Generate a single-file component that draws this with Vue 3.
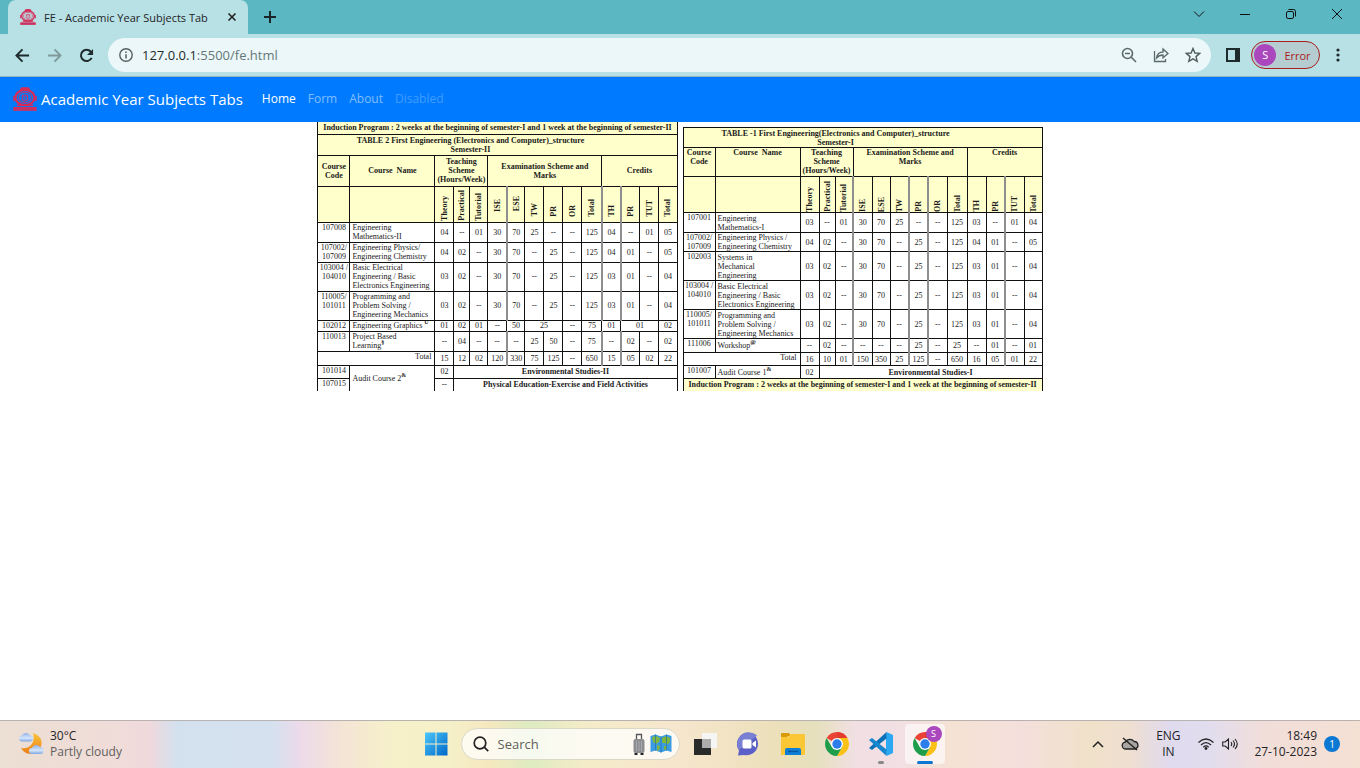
<script setup>
import { ref } from 'vue'

const address = ref('127.0.0.1:5500/fe.html')
const query = ref('')

const navLinks = [
  { label: 'Home', state: 'active' },
  { label: 'Form', state: '' },
  { label: 'About', state: '' },
  { label: 'Disabled', state: 'disabled' }
]

const columns = ['Theory', 'Practical', 'Tutorial', 'ISE', 'ESE', 'TW', 'PR', 'OR', 'Total', 'TH', 'PR', 'TUT', 'Total']
const induction = 'Induction Program : 2 weeks at the beginning of semester-I and 1 week at the beginning of semester-II'

const n = (text) => text.split(' ').map((v) => ({ v, span: 1 }))

const semesters = [
  {
    id: 'second',
    inductionFirst: true,
    title: 'TABLE 2 First Engineering (Electronics and Computer)_structure',
    term: 'Semester-II',
    soft: [3, 8, 9],
    rows: [
      { h: 'two', code: ['107008'], name: ['Engineering', 'Mathematics-II'], cells: n('04 -- 01 30 70 25 -- -- 125 04 -- 01 05') },
      { h: 'two', code: ['107002/', '107009'], name: ['Engineering Physics/', 'Engineering Chemistry'], cells: n('04 02 -- 30 70 -- 25 -- 125 04 01 -- 05') },
      { h: 'three', code: ['103004 /', '104010'], name: ['Basic Electrical', 'Engineering / Basic', 'Electronics Engineering'], cells: n('03 02 -- 30 70 -- 25 -- 125 03 01 -- 04') },
      { h: 'three', code: ['110005/', '101011'], name: ['Programming and', 'Problem Solving /', 'Engineering Mechanics'], cells: n('03 02 -- 30 70 -- 25 -- 125 03 01 -- 04') },
      {
        h: 'one', code: ['102012'], name: ['Engineering Graphics '], mark: 'U',
        cells: [...n('01 02 01 -- 50'), { v: '25', span: 2 }, ...n('-- 75 01'), { v: '01', span: 2 }, ...n('02')]
      },
      { h: 'two', code: ['110013'], name: ['Project Based', 'Learning'], mark: '§', cells: n('-- 04 -- -- -- 25 50 -- 75 -- 02 -- 02') }
    ],
    total: n('15 12 02 120 330 75 125 -- 650 15 05 02 22'),
    audit: 'Audit Course 2',
    audits: [
      { code: '101014', theory: '02', text: 'Environmental Studies-II' },
      { code: '107015', theory: '--', text: 'Physical Education-Exercise and Field Activities' }
    ]
  },
  {
    id: 'first',
    inductionFirst: false,
    title: 'TABLE -1 First Engineering(Electronics and Computer)_structure',
    term: 'Semester-I',
    soft: [2, 5, 6, 10],
    rows: [
      { h: 'two', code: ['107001'], name: ['Engineering', 'Mathematics-I'], cells: n('03 -- 01 30 70 25 -- -- 125 03 -- 01 04') },
      { h: 'snug', code: ['107002/', '107009'], name: ['Engineering Physics /', 'Engineering Chemistry'], cells: n('04 02 -- 30 70 -- 25 -- 125 04 01 -- 05') },
      { h: 'three', code: ['102003'], name: ['Systems in', 'Mechanical', 'Engineering'], cells: n('03 02 -- 30 70 -- 25 -- 125 03 01 -- 04') },
      { h: 'three', code: ['103004 /', '104010'], name: ['Basic Electrical', 'Engineering / Basic', 'Electronics Engineering'], cells: n('03 02 -- 30 70 -- 25 -- 125 03 01 -- 04') },
      { h: 'three', code: ['110005/', '101011'], name: ['Programming and', 'Problem Solving /', 'Engineering Mechanics'], cells: n('03 02 -- 30 70 -- 25 -- 125 03 01 -- 04') },
      { h: 'wide', code: ['111006'], name: ['Workshop'], mark: '@', cells: n('-- 02 -- -- -- -- 25 -- 25 -- 01 -- 01') }
    ],
    total: n('16 10 01 150 350 25 125 -- 650 16 05 01 22'),
    audit: 'Audit Course 1',
    audits: [{ code: '101007', theory: '02', text: 'Environmental Studies-I' }]
  }
]
</script>

<template>
  <div class="screen">
    <svg class="defs" aria-hidden="true">
      <defs>
        <symbol id="emblem" viewBox="0 0 24 24">
          <g fill="none" stroke="#d52b58">
            <ellipse cx="12" cy="10.500" rx="9.500" ry="7.600" stroke-width="2.200" />
            <ellipse cx="12" cy="10.500" rx="6.600" ry="5.400" stroke-width=".9" />
            <path d="M7 2.300h10M8 .900h8M1 9v5M23 9v5" stroke-width="1.500" />
            <path d="M9.500 7.500v6M12 6.500v8M14.500 7.500v6M8.500 10l3.500-2 3.500 2M8.500 12.500l3.500 2 3.500-2" stroke-width=".8" />
            <path d="M4 18.300h16" stroke-width="1.600" />
          </g>
          <path d="M.3 20h23.400v3.800H.3z" fill="#d52b58" />
          <path d="M3 22h18" stroke="#8d4c8f" stroke-width=".8" stroke-dasharray="2 1" />
        </symbol>
        <symbol id="chrome" viewBox="0 0 24 24">
          <path d="M12 12 1.610 6A12 12 0 0 1 22.390 6z" fill="#ea4335" />
          <path d="M12 12V0A12 12 0 0 1 22.390 6z" fill="#e33b2e" />
          <path d="M22.390 6A12 12 0 0 1 12 24l5.200-9L12 6z" fill="#fbc116" />
          <path d="M1.610 6A12 12 0 0 0 12 24l5.200-9L6.800 15z" fill="#1e9e4a" />
          <circle cx="12" cy="12" r="6" fill="#fff" />
          <circle cx="12" cy="12" r="4.700" fill="#2b7de9" />
        </symbol>
      </defs>
    </svg>

    <header class="browser">
      <div class="tabstrip">
        <div class="tab">
          <svg class="favicon"><use href="#emblem" /></svg>
          <span class="tab-title">FE - Academic Year Subjects Tab</span>
          <button class="tab-close" aria-label="Close tab">
            <svg viewBox="0 0 10 10"><path d="M1.500 1.500l7 7M8.500 1.500l-7 7" stroke="#222" stroke-width="1.600" /></svg>
          </button>
        </div>
        <button class="new-tab" aria-label="New tab">
          <svg viewBox="0 0 12 12"><path d="M6 0v12M0 6h12" stroke="#1b2527" stroke-width="2" /></svg>
        </button>
        <div class="window-controls">
          <button aria-label="Search tabs"><svg viewBox="0 0 12 12"><path d="M1 3.500l5 5 5-5" /></svg></button>
          <button aria-label="Minimize"><svg viewBox="0 0 12 12"><path d="M1 6.500h10" /></svg></button>
          <button aria-label="Restore">
            <svg viewBox="0 0 12 12"><rect x="1.500" y="3.500" width="7" height="7" rx="1.500" /><path d="M3.500 1.500h5q2 0 2 2v5" /></svg>
          </button>
          <button aria-label="Close"><svg viewBox="0 0 12 12"><path d="M1 1l10 10M11 1L1 11" /></svg></button>
        </div>
      </div>
      <div class="toolbar">
        <button class="tool" aria-label="Back">
          <svg viewBox="0 0 16 16"><path d="M15 8H2M8 1.500L1.500 8 8 14.500" stroke="#1f2a2c" stroke-width="2" fill="none" /></svg>
        </button>
        <button class="tool" aria-label="Forward">
          <svg viewBox="0 0 16 16"><path d="M1 8h13M8 1.500L14.500 8 8 14.500" stroke="#80999b" stroke-width="2" fill="none" /></svg>
        </button>
        <button class="tool" aria-label="Reload">
          <svg viewBox="0 0 16 16"><path d="M13.500 10.500A6 6 0 1 1 12.600 4L14 5.500" stroke="#1f2a2c" stroke-width="2.100" fill="none" /><path d="M15 1v6.500H8.500z" fill="#1f2a2c" /></svg>
        </button>
        <div class="omnibox">
          <svg class="info" viewBox="0 0 14 14"><circle cx="7" cy="7" r="6.200" fill="none" stroke="#53605f" stroke-width="1.400" /><path d="M7 6.200v4.300M7 3.500v1.500" stroke="#53605f" stroke-width="1.500" /></svg>
          <label class="address">
            <span class="address-text" aria-hidden="true"><b>127.0.0.1</b>:5500/fe.html</span>
            <input v-model="address" aria-label="Address" />
          </label>
          <button aria-label="Zoom">
            <svg viewBox="0 0 16 16"><g fill="none" stroke="#5b6a6b" stroke-width="1.600"><circle cx="6.500" cy="6.500" r="5" /><path d="M10.300 10.300l4.700 4.700M4 6.500h5" /></g></svg>
          </button>
          <button aria-label="Share">
            <svg viewBox="0 0 16 16"><g fill="none" stroke="#5b6a6b" stroke-width="1.300"><path d="M1.500 4v10.500h11V12" /><path d="M3.500 11Q4.500 5 10 5V2l5 4.500-5 4.300V8Q6 8 3.500 11z" /></g></svg>
          </button>
          <button aria-label="Bookmark">
            <svg viewBox="0 0 16 16"><path d="M8 1.500l1.900 4.500 4.800.4-3.700 3.200 1.200 4.700L8 11.800l-4.200 2.500L5 9.600 1.300 6.400l4.800-.4z" fill="none" stroke="#4f5e5f" stroke-width="1.400" /></svg>
          </button>
        </div>
        <button class="tool side" aria-label="Side panel">
          <svg viewBox="0 0 14 14"><path d="M1 1h12v12H1z" fill="none" stroke="#1f2a2c" stroke-width="2" /><path d="M9 0h5v14H9z" fill="#1f2a2c" /></svg>
        </button>
        <button class="profile"><span class="avatar">S</span>Error</button>
        <button class="menu" aria-label="Menu">
          <svg viewBox="0 0 4 14"><g fill="#1f2a2c"><circle cx="2" cy="2" r="1.600" /><circle cx="2" cy="7" r="1.600" /><circle cx="2" cy="12" r="1.600" /></g></svg>
        </button>
      </div>
    </header>

    <nav class="navbar">
      <a class="brand" href="#">
        <svg><use href="#emblem" /></svg>
        <span>Academic Year Subjects Tabs</span>
      </a>
      <a v-for="link in navLinks" :key="link.label" class="nav-link" :class="link.state" href="#">{{ link.label }}</a>
    </nav>

    <main class="content">
      <table v-for="s in semesters" :key="s.id" class="scheme" :class="s.id">
        <colgroup>
          <col class="c-code" /><col class="c-name" /><col class="c-th" /><col class="c-pr" /><col class="c-tu" />
          <col v-for="i in 10" :key="i" :class="i === 6 ? 'c-total' : i === 2 || i === 10 ? 'c-tu' : 'c-th'" />
        </colgroup>
        <thead>
          <tr v-if="s.inductionFirst" class="r-induction"><th colspan="15">{{ induction }}</th></tr>
          <tr class="r-title"><th colspan="15">{{ s.title }}<br />{{ s.term }}</th></tr>
          <tr class="r-groups">
            <th>Course<br />Code</th>
            <th>Course&nbsp; Name</th>
            <th colspan="3">Teaching<br />Scheme<br />(Hours/Week)</th>
            <th colspan="6">Examination Scheme and<br />Marks</th>
            <th colspan="4">Credits</th>
          </tr>
          <tr class="r-columns">
            <th></th>
            <th></th>
            <th v-for="(c, i) in columns" :key="i" :class="{ soft: s.soft.includes(i), low: i < 3, high: i === 3 || i === 4 }"><span>{{ c }}</span></th>
          </tr>
        </thead>
        <tbody>
          <tr v-for="row in s.rows" :key="row.code[0]" :class="row.h">
            <td class="code"><div v-for="line in row.code" :key="line">{{ line }}</div></td>
            <td class="name"><div v-for="(line, i) in row.name" :key="line">{{ line }}<sup v-if="row.mark && i === row.name.length - 1">{{ row.mark }}</sup></div></td>
            <td v-for="(cell, i) in row.cells" :key="i" :colspan="cell.span" :class="{ soft: row.cells.length === 13 && s.soft.includes(i) }">{{ cell.v }}</td>
          </tr>
          <tr class="r-total">
            <td colspan="2" class="total">Total</td>
            <td v-for="(cell, i) in s.total" :key="i" :class="{ soft: s.soft.includes(i) }">{{ cell.v }}</td>
          </tr>
          <tr v-for="(a, i) in s.audits" :key="a.code" class="r-audit">
            <td class="code">{{ a.code }}</td>
            <td v-if="i === 0" class="name audit" :rowspan="s.audits.length">{{ s.audit }}<sup>&amp;</sup></td>
            <td>{{ a.theory }}</td>
            <td colspan="12" class="strong">{{ a.text }}</td>
          </tr>
          <tr v-if="!s.inductionFirst" class="r-induction"><th colspan="15">{{ induction }}</th></tr>
        </tbody>
      </table>
    </main>

    <footer class="taskbar">
      <button class="weather">
        <svg viewBox="0 0 26 26">
          <defs>
            <linearGradient id="moon" x1="0" y1="0" x2="0" y2="1"><stop offset="0" stop-color="#f8c53a" /><stop offset="1" stop-color="#ee7d17" /></linearGradient>
            <linearGradient id="cloud" x1="0" y1="0" x2="0" y2="1"><stop offset="0" stop-color="#8fb4ec" /><stop offset=".6" stop-color="#d6e6fb" /><stop offset="1" stop-color="#7ea6e2" /></linearGradient>
          </defs>
          <path d="M15 2c7 2 10 8 8 13-2 8-14 12-20 2 8 2 15-5 12-15z" fill="url(#moon)" />
          <path d="M4 10.500a3 3 0 0 1 0-6 4.500 4.500 0 0 1 8 0 3 3 0 0 1 0 6z" fill="url(#cloud)" />
          <path d="M14 23a3 3 0 0 1 0-6 4.500 4.500 0 0 1 8-1 3.500 3.500 0 0 1 0 7z" fill="url(#cloud)" />
        </svg>
        <span class="weather-text"><span>30°C</span><span class="muted">Partly cloudy</span></span>
      </button>

      <div class="apps">
        <button class="app" aria-label="Start">
          <svg viewBox="0 0 24 24">
            <defs><linearGradient id="win" x1="0" y1="0" x2="1" y2="1"><stop offset="0" stop-color="#4cc8fa" /><stop offset="1" stop-color="#0067c8" /></linearGradient></defs>
            <path d="M1 .500h10.500V11.500H1zM12.500.500H23.500V11.500H12.500zM1 12.500h10.500V23.500H1zM12.500 12.500H23.500V23.500H12.500z" fill="url(#win)" />
          </svg>
        </button>
        <label class="search">
          <svg class="glass" viewBox="0 0 16 16"><g fill="none" stroke="#222" stroke-width="1.700"><circle cx="7" cy="7" r="5.800" /><path d="M11.200 11.200l4 4" /></g></svg>
          <input v-model="query" placeholder="Search" aria-label="Search" />
          <svg class="suitcase" viewBox="0 0 14 22"><path d="M4.500 6V1.500h5V6" fill="none" stroke="#55565a" stroke-width="1.300" /><rect x="1.500" y="6" width="11" height="14" rx="2" fill="#8d8e92" /><path d="M4.500 8v10M7 8v10M9.500 8v10" stroke="#a8a9ad" /><path d="M2.500 20h3v2h-3zM8.500 20h3v2h-3z" fill="#222" /></svg>
          <svg class="map" viewBox="0 0 22 20"><path d="M.5 2l5-1.500 5.500 2 5.500-2 5 1.500v16l-5-1.500-5.500 2-5.500-2-5 1.500z" fill="#3c9ce3" /><path d="M2 3l4-1 4 2-1 4-3 2-3-2zM7 11l3 1-1 4-2 1zM12 4l4-2 4 2v4l-3 3-2-2-3 0zM14 12l3 0 0 3-3 1z" fill="#7fb63d" /><path d="M5.500.5v16M11 2.500v16M16.500.5v16" stroke="#246fa9" stroke-width=".7" /></svg>
        </label>
        <button class="app" aria-label="Task view">
          <svg viewBox="0 0 24 24"><path d="M1 7h17v16H1z" fill="#292b2b" /><path d="M9 1h15v15H9z" fill="#f5f5f3" /><path d="M9 7h9v9H9z" fill="#adadad" /></svg>
        </button>
        <button class="app" aria-label="Chat">
          <svg viewBox="0 0 24 24"><path d="M12 .5A11.500 11.500 0 1 1 7 23l-6 .5 1-5A11.500 11.500 0 0 1 12 .5z" fill="#5b5fc7" /><path d="M2 18A11.500 11.500 0 0 1 12 .5q5 0 8 3z" fill="#7980d4" /><rect x="5.500" y="7.500" width="9" height="9" rx="1.500" fill="#fff" /><path d="M15.500 11l3.500-2.500v7L15.500 13z" fill="#fff" /></svg>
        </button>
        <button class="app" aria-label="File Explorer">
          <svg viewBox="0 0 24 24"><path d="M0 2q0-1 1-1h7l2 3h-3L5 6H0z" fill="#d99a07" /><path d="M0 5h7l3-3h13q1 0 1 1v20H0z" fill="#fcc736" /><path d="M4 23v-5q0-2 2-2h12q2 0 2 2v5z" fill="#0f7fd6" /><path d="M7 19.500h10" stroke="#09549c" stroke-width="1.300" /></svg>
        </button>
        <button class="app" aria-label="Chrome"><svg><use href="#chrome" /></svg></button>
        <button class="app running" aria-label="Visual Studio Code">
          <svg viewBox="0 0 24 24"><path d="M17.500 0L24 3v18l-6.500 3L17 18V6z" fill="#2aa8f2" /><path d="M17.500 0v6.500L3 18 0 16z" fill="#0b72b8" /><path d="M17.500 24v-6.500L3 6 0 8z" fill="#1687cf" /></svg>
        </button>
        <button class="app current" aria-label="Chrome, profile S"><svg><use href="#chrome" /></svg><span class="badge">S</span></button>
      </div>

      <div class="tray">
        <button class="tray-up" aria-label="Hidden icons"><svg viewBox="0 0 12 12"><path d="M1 9l5-5 5 5" fill="none" stroke="#222" stroke-width="1.500" /></svg></button>
        <button class="tray-cloud" aria-label="OneDrive">
          <svg viewBox="0 0 18 14"><path d="M5 12a3.500 3.500 0 0 1-.5-7A5 5 0 0 1 13 4.500 3.800 3.800 0 0 1 14 12z" fill="#aaa5a3" stroke="#222" stroke-width="1.300" /><path d="M2 1l14 12" stroke="#222" stroke-width="1.500" /></svg>
        </button>
        <button class="lang"><span>ENG</span><span>IN</span></button>
        <button class="signal" aria-label="Network and sound">
          <svg viewBox="0 0 16 12"><g fill="none" stroke="#222" stroke-width="1.200"><path d="M.5 4.500q7.500-7 15 0M3 7q5-4.800 10 0M5.300 9.200q2.700-2.500 5.400 0" /></g><circle cx="8" cy="10.500" r="1.400" fill="#222" /></svg>
          <svg viewBox="0 0 16 12"><g fill="none" stroke="#222" stroke-width="1.100"><path d="M.7 4v4h2.500l3.300 3V1L3.200 4z" /><path d="M9 4q1.500 2 0 4M11 2.500q3 3.500 0 7M13 1q4.500 5 0 10" /></g></svg>
        </button>
        <button class="clock"><span>18:49</span><span>27-10-2023</span></button>
        <button class="notice">1</button>
      </div>
    </footer>
  </div>
</template>

<style>
body { margin: 0; }
</style>

<style scoped>
.screen {
  display: flex;
  flex-direction: column;
  min-height: 100vh;
  background: #fff;
  font-family: "Open Sans", "Noto Sans", sans-serif;
  font-size: 12px;
  color: #1f2426;
}
.defs { position: absolute; width: 0; height: 0; }
button {
  display: flex;
  align-items: center;
  justify-content: center;
  padding: 0;
  border: 0;
  background: none;
  font: inherit;
  color: inherit;
}
input { min-width: 0; padding: 0; border: 0; outline: 0; background: none; font: inherit; }
a { text-decoration: none; }
svg { display: block; flex: none; }

.tabstrip { display: flex; height: 34px; padding-left: 8px; background: #5bb7c1; }
.tab {
  display: flex;
  align-items: center;
  box-sizing: border-box;
  width: 240px;
  padding: 0 11px 0 12px;
  border-radius: 8px 8px 0 0;
  background: #b7e1e5;
}
.favicon { width: 16px; height: 16px; }
.tab-title { flex: 1; margin-left: 8px; white-space: nowrap; overflow: hidden; font-size: 11px; }
.tab-close svg { width: 10px; height: 10px; }
.new-tab { width: 44px; }
.new-tab svg { width: 12px; height: 12px; }
.window-controls { display: flex; margin-left: auto; height: 28px; }
.window-controls button { width: 46px; }
.window-controls svg { width: 12px; height: 12px; fill: none; stroke: #111; stroke-width: 1; }

.toolbar {
  display: flex;
  align-items: center;
  box-sizing: border-box;
  height: 43px;
  padding: 0 14px 0 6px;
  border-bottom: 1px solid #91b5b8;
  background: #b7e1e5;
}
.tool { width: 32px; height: 32px; }
.tool svg { width: 15px; height: 15px; }
.omnibox {
  display: flex;
  flex: 1;
  align-items: center;
  height: 34px;
  margin-left: 6px;
  padding: 0 2px 0 11px;
  border-radius: 17px;
  background: #ebf7f8;
}
.info { width: 14px; height: 14px; }
.address { display: grid; flex: 1; margin-left: 9px; font-size: 13px; line-height: 20px; color: #65777a; }
.address > * { grid-area: 1 / 1; }
.address b { font-weight: 400; color: #1f2a2c; }
.address input { color: transparent; caret-color: #1f2a2c; }
.omnibox button { width: 32px; height: 32px; }
.omnibox button svg { width: 16px; height: 16px; }
.side { margin-left: 6px; }
.tool.side svg { width: 14px; height: 14px; }
.profile {
  box-sizing: border-box;
  width: 69px;
  height: 28px;
  margin-left: 2px;
  padding-right: 6px;
  border: 1px solid #a91d1f;
  border-radius: 14px;
  background: #b5ccd0;
  color: #aa1c1c;
  font-size: 11px;
}
.avatar { width: 22px; margin-right: 8px; border-radius: 50%; background: #ab47bc; color: #fff; line-height: 22px; }
.menu { width: 16px; margin-left: 10px; }
.menu svg { width: 4px; height: 14px; }

.navbar {
  display: flex;
  align-items: center;
  box-sizing: border-box;
  height: 45px;
  padding: 0 0 2px 13px;
  background: #007bff;
  font-size: 12px;
}
.brand { display: flex; align-items: center; gap: 4px; margin-right: 13px; color: #fff; font-size: 15px; }
.brand svg { width: 24px; height: 24px; }
.nav-link { padding: 0 6px; color: #80bdff; }
.nav-link.active { color: #fff; }
.nav-link.disabled { color: #409cff; }

.content { display: flex; flex: 1; align-items: flex-start; justify-content: center; gap: 5px; }
.scheme {
  width: 360px;
  table-layout: fixed;
  border-collapse: collapse;
  border-bottom: hidden;
  font-family: "Liberation Serif", serif;
  font-size: 8px;
  line-height: 9px;
  color: #1a1a1a;
}
.second { border-top: hidden; }
.first { margin-top: 5px; }
.c-code { width: 32px; }
.c-name { width: 85px; }
.c-pr { width: 16px; }
.c-tu { width: 18px; }
.c-th { width: 19px; }
.c-total { width: 20px; }
.scheme th, .scheme td { padding: 0; border: 1px solid #111; text-align: center; white-space: nowrap; }
.scheme th { background: #ffffcc; font-weight: 700; }
.scheme .r-title th { padding-right: 54px; }
.scheme .soft { border-right: 2px solid #8e8e8e; }
.scheme .code { vertical-align: top; }
.scheme .name { padding-left: 2px; text-align: left; }
.scheme .name div { white-space: pre; }
.scheme .total { padding-right: 3px; text-align: right; vertical-align: top; }
.scheme .strong { font-weight: 700; }
.scheme sup { font-size: 6px; line-height: 0; font-weight: 700; }
.r-induction { height: 12px; }
.r-title { height: 21px; }
.first .r-title { height: 20px; }
.second .r-groups { height: 31px; }
.first .r-groups { height: 29px; }
.first .r-groups th { vertical-align: top; }
.r-columns { height: 36px; }
.scheme .r-columns th { padding-bottom: 5px; vertical-align: bottom; }
.scheme .r-columns .low { padding-bottom: 1px; }
.scheme .r-columns .high { padding-bottom: 10px; }
.scheme.first .r-columns th { padding-bottom: 0; }
.r-columns span { display: block; width: 9px; margin: 0 auto; writing-mode: vertical-rl; transform: rotate(180deg); }
.one { height: 11px; }
.wide { height: 14px; }
.snug { height: 19px; }
.two { height: 20px; }
.three { height: 29px; }
.r-total { height: 14px; }
.first .r-total { height: 13px; }
.r-audit { height: 13px; }

.taskbar {
  display: grid;
  grid-template-columns: 1fr auto 1fr;
  align-items: center;
  box-sizing: border-box;
  height: 48px;
  padding-bottom: 2px;
  border-top: 1px solid #b8b2b0;
  background: linear-gradient(90deg, #ecdfd3 0, #f0dcd9 9%, #efd9dc 11%, #d3e0ee 13%, #d5e1ef 20%, #ecdaea 22%, #f4e4d6 25%, #f6f1c9 29%, #f5f0c8 33%, #f5e8bf 36%, #deebc0 39%, #f4ecc8 43%, #f6e6cd 50%, #ece0ba 57%, #e6e0bd 60%, #f1dfe4 63%, #f1dfe4 66%, #f5e2d3 70%, #f4dfdc 75%, #f0e1c9 80%, #efdfd0 83%, #e0daee 86%, #e1ddee 89%, #f2ded9 93%, #f4e0d3 100%);
}
.weather { justify-self: start; gap: 6px; padding-left: 18px; }
.weather svg { width: 26px; height: 26px; }
.weather-text, .lang, .clock { display: flex; flex-direction: column; line-height: 16px; }
.weather-text { align-items: flex-start; }
.muted { color: #62605e; }
.apps { display: flex; align-items: center; gap: 4px; }
.app { position: relative; width: 40px; height: 40px; border-radius: 4px; }
.app svg { width: 24px; height: 24px; }
.search {
  display: flex;
  align-items: center;
  box-sizing: border-box;
  width: 219px;
  height: 32px;
  margin: 0 1px;
  padding: 0 7px 0 11px;
  border: 1px solid #dcd8c8;
  border-radius: 16px;
  background: rgba(255, 255, 255, 0.75);
  font-size: 13px;
}
.search input { flex: 1; margin-left: 9px; color: #333; }
.search input::placeholder { color: #5e5e5a; opacity: 1; }
.glass { width: 16px; height: 16px; }
.suitcase { width: 14px; height: 22px; margin-right: 4px; }
.map { width: 22px; height: 20px; }
.current { background: rgba(255, 255, 255, 0.6); }
.running::after, .current::after {
  content: "";
  position: absolute;
  bottom: 0;
  left: 17px;
  width: 6px;
  height: 3px;
  border-radius: 2px;
  background: #888;
}
.current::after { left: 12px; width: 16px; background: #0b76d1; }
.badge { position: absolute; top: 2px; right: 3px; width: 16px; border-radius: 50%; background: #ab47bc; color: #fff; font-size: 9px; line-height: 16px; }
.tray { display: flex; align-items: center; justify-self: end; padding-right: 20px; }
.tray-up svg { width: 12px; height: 12px; }
.tray-cloud { margin-left: 17px; }
.tray-cloud svg { width: 18px; height: 14px; }
.lang { width: 24px; margin-left: 17px; }
.signal { gap: 8px; margin-left: 18px; }
.signal svg { width: 16px; height: 12px; }
.clock { align-items: flex-end; margin-left: 16px; }
.notice { width: 16px; height: 16px; margin-left: 7px; border-radius: 50%; background: #0b78d4; color: #fff; font-size: 10px; }
</style>
